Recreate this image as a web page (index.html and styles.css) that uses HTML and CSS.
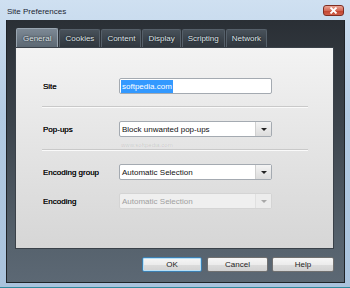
FILE: index.html
```html
<!DOCTYPE html>
<html>
<head>
    <title>Site Preferences</title>
    <link rel="stylesheet" href="styles.css">
</head>
<body>
    <div class="window">
        <div class="titlebar">
            <span class="title">Site Preferences</span>
            <span class="close">
                <svg width="9" height="7" viewBox="0 0 9 7">
                    <path d="M1.5 0.5 L7.5 6.5 M7.5 0.5 L1.5 6.5" stroke="#fff" stroke-width="1.8"/>
                </svg>
            </span>
        </div>

        <div class="client">
            <div class="tabs">
                <div class="tab active">General</div>
                <div class="tab">Cookies</div>
                <div class="tab">Content</div>
                <div class="tab">Display</div>
                <div class="tab">Scripting</div>
                <div class="tab">Network</div>
            </div>

            <div class="panel">
                <div class="row">
                    <span class="label">Site</span>
                    <div class="input"><span class="selected">softpedia.com</span></div>
                </div>
                <div class="sep"></div>
                <div class="row">
                    <span class="label">Pop-ups</span>
                    <div class="select">
                        <span class="value">Block unwanted pop-ups</span>
                        <span class="arrow"></span>
                    </div>
                </div>
                <div class="sep"></div>
                <div class="row">
                    <span class="label">Encoding group</span>
                    <div class="select">
                        <span class="value">Automatic Selection</span>
                        <span class="arrow"></span>
                    </div>
                </div>
                <div class="row row-gap">
                    <span class="label">Encoding</span>
                    <div class="select disabled">
                        <span class="value">Automatic Selection</span>
                        <span class="arrow"></span>
                    </div>
                </div>

                <span class="watermark">www.softpedia.com</span>
            </div>

            <div class="buttons">
                <button class="btn btn-default">OK</button>
                <button class="btn btn-cancel">Cancel</button>
                <button class="btn btn-help">Help</button>
            </div>
        </div>
    </div>
</body>
</html>
```

FILE: styles.css
```css
body {
    margin: 0;
    padding: 0;
    font-family: 'Liberation Sans', Arial, sans-serif;
    font-size: 8px;
    background: #fff;
}
.window {
    width: 350px;
    height: 288px;
    box-sizing: border-box;
    background: linear-gradient(#cfe0f1, #b3cbe3 40%, #a9c2dc);
    border-bottom: 1px solid #2e8a9e;
    overflow: hidden;
}
.titlebar {
    height: 20px;
    display: flex;
    align-items: flex-start;
    justify-content: space-between;
}
.title {
    margin: 7px 0 0 7px;
    font-size: 8px;
    color: #1b2633;
}
.close {
    width: 21px;
    height: 11px;
    margin: 5px 6px 0 0;
    box-sizing: border-box;
    border: 1px solid #7e2d22;
    border-radius: 3px;
    background: linear-gradient(#eba595, #d46a57 50%, #c0402c 51%, #d0604a);
    display: flex;
    align-items: center;
    justify-content: center;
}
.client {
    margin: 0 5px 0 6px;
    height: 263px;
    box-sizing: border-box;
    padding: 8px 10px 0 8px;
    background: linear-gradient(#2a2f35, #3c444c 40%, #56626d 85%, #5c6874);
    border: 1px solid #1f2328;
    border-top: none;
}
.tabs {
    display: flex;
    height: 19px;
    padding-left: 1px;
}
.tab {
    height: 18px;
    margin-top: 1px;
    padding: 0 5px;
    box-sizing: border-box;
    display: flex;
    align-items: center;
    color: #dfe5ea;
    text-shadow: 0 0 2px #000;
    background: linear-gradient(#48515a, #30373e);
    border: 1px solid #56606a;
    border-bottom: none;
    border-radius: 2px 2px 0 0;
    margin-right: 1px;
}
.tab.active {
    height: 19px;
    margin-top: 0;
    padding: 0 6px;
    background: linear-gradient(#7d8995, #5c6873);
    border-color: #9aa6b1;
}
.panel {
    position: relative;
    height: 202px;
    box-sizing: border-box;
    padding: 30px 25px 0 26px;
    background: linear-gradient(#f3f3f3, #e4e4e4 50%, #d6d6d6);
    border: 1px solid #3a4149;
}
.row {
    display: flex;
    align-items: center;
    height: 16px;
    padding-left: 1px;
}
.row-gap {
    margin-top: 13px;
}
.label {
    width: 76px;
    color: #111;
    text-shadow: 0 0 0.4px #111;
}
.sep {
    height: 0;
    margin: 12px 0 13px;
    border-top: 1px solid #c9c9c9;
    border-bottom: 1px solid #fafafa;
}
.input {
    width: 153px;
    height: 16px;
    box-sizing: border-box;
    border: 1px solid #a4aab1;
    border-radius: 2px;
    background: #fff;
    padding: 1px 1px;
    display: flex;
    align-items: center;
}
.selected {
    background: #3399ff;
    color: #fff;
    padding: 1px 1px;
    line-height: 11px;
}
.select {
    width: 153px;
    height: 16px;
    box-sizing: border-box;
    border: 1px solid #a4aab1;
    border-radius: 2px;
    background: #fff;
    display: flex;
    align-items: center;
}
.value {
    flex: 1;
    padding-left: 2px;
    color: #111;
}
.arrow {
    width: 15px;
    height: 14px;
    background: linear-gradient(#f4f4f4, #dcdcdc);
    border-left: 1px solid #d0d0d0;
    position: relative;
}
.arrow::after {
    content: '';
    position: absolute;
    left: 5px;
    top: 6px;
    border-left: 3px solid transparent;
    border-right: 3px solid transparent;
    border-top: 3px solid #222;
}
.select.disabled {
    background: #efefef;
    border-color: #d4d4d4;
}
.select.disabled .value {
    color: #a0a0a0;
}
.select.disabled .arrow {
    background: #ececec;
    border-left-color: #e0e0e0;
}
.select.disabled .arrow::after {
    border-top-color: #a8a8a8;
}
.watermark {
    position: absolute;
    left: 105px;
    top: 94px;
    font-size: 6px;
    color: rgba(0, 0, 0, 0.12);
}
.buttons {
    display: flex;
    justify-content: flex-end;
    margin-top: 8px;
}
.btn {
    height: 15px;
    padding: 0;
    font-family: 'Liberation Sans', Arial, sans-serif;
    font-size: 8px;
    color: #222;
    border: 1px solid #707070;
    border-radius: 2px;
    background: linear-gradient(#f6f6f6, #ececec 50%, #dcdcdc 51%, #d2d2d2);
    margin-left: 5px;
}
.btn-default {
    width: 60px;
    border-color: #3c7fb1;
    box-shadow: inset 0 0 0 1px #b7e0f7;
}
.btn-cancel {
    width: 61px;
}
.btn-help {
    width: 62px;
    margin-left: 4px;
}
```
